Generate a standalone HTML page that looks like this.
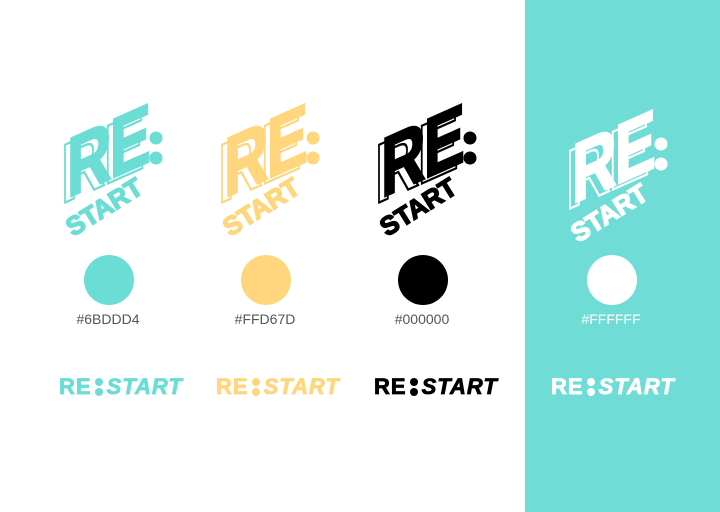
<!DOCTYPE html>
<html><head><meta charset="utf-8"><style>
body{margin:0;width:720px;height:512px;background:#fff;position:relative;overflow:hidden;font-family:"Liberation Sans",sans-serif}
.panel{position:absolute;left:525px;top:0;width:195px;height:512px;background:#6FDDD5}
.logo{position:absolute;width:120px;height:140px}
.c{position:absolute;width:50px;height:50px;border-radius:50%;top:255px}
.hex{position:absolute;top:311px;width:120px;text-align:center;font-size:14px;color:#555}
.wm{position:absolute;top:374px;font-size:22px;font-weight:bold;white-space:nowrap;letter-spacing:1px;-webkit-text-stroke:0.8px currentColor}
.wm i{font-style:italic}
.wm b{display:inline-block;width:10px;position:relative;height:20px;vertical-align:-3px;margin:0 3px 0 2px}
.wm b:before,.wm b:after{content:"";position:absolute;left:1px;width:8px;height:8px;border-radius:50%;background:currentColor}
.wm b:before{top:1px}.wm b:after{top:11px}
</style></head><body>
<div class="panel"></div>

<svg class="logo" style="left:55px;top:100px" viewBox="0 0 120 140">
<g font-family="Liberation Sans" font-weight="bold">
<g transform="translate(12,98) skewY(-24) scale(0.88,1.2)"><text x="-7" y="3" font-size="70" fill="#fff" stroke="#6BDDD4" stroke-width="2" letter-spacing="-2">RE</text><text x="0" y="0" font-size="70" fill="#6BDDD4" stroke="#6BDDD4" stroke-width="2" letter-spacing="-2">RE</text></g>
<circle cx="101" cy="38" r="6.5" fill="#6BDDD4"/><circle cx="101" cy="58" r="6.5" fill="#6BDDD4"/>
<text transform="translate(18,137) rotate(-32)" font-size="26" stroke="#6BDDD4" stroke-width="1.5" fill="#6BDDD4">START</text></g></svg>

<svg class="logo" style="left:212px;top:100px" viewBox="0 0 120 140">
<g font-family="Liberation Sans" font-weight="bold">
<g transform="translate(12,98) skewY(-24) scale(0.88,1.2)"><text x="-7" y="3" font-size="70" fill="#fff" stroke="#FFD67D" stroke-width="2" letter-spacing="-2">RE</text><text x="0" y="0" font-size="70" fill="#FFD67D" stroke="#FFD67D" stroke-width="2" letter-spacing="-2">RE</text></g>
<circle cx="101" cy="38" r="6.5" fill="#FFD67D"/><circle cx="101" cy="58" r="6.5" fill="#FFD67D"/>
<text transform="translate(18,137) rotate(-32)" font-size="26" stroke="#FFD67D" stroke-width="1.5" fill="#FFD67D">START</text></g></svg>

<svg class="logo" style="left:369px;top:100px" viewBox="0 0 120 140">
<g font-family="Liberation Sans" font-weight="bold">
<g transform="translate(12,98) skewY(-24) scale(0.88,1.2)"><text x="-7" y="3" font-size="70" fill="#fff" stroke="#000" stroke-width="2" letter-spacing="-2">RE</text><text x="0" y="0" font-size="70" fill="#000" stroke="#000" stroke-width="2" letter-spacing="-2">RE</text></g>
<circle cx="101" cy="38" r="6.5" fill="#000"/><circle cx="101" cy="58" r="6.5" fill="#000"/>
<text transform="translate(18,137) rotate(-32)" font-size="26" stroke="#000" stroke-width="1.5" fill="#000">START</text></g></svg>

<svg class="logo" style="left:560px;top:106px" viewBox="0 0 120 140">
<g font-family="Liberation Sans" font-weight="bold">
<g transform="translate(12,98) skewY(-24) scale(0.88,1.2)"><text x="-7" y="3" font-size="70" fill="#6FDDD5" stroke="#fff" stroke-width="2" letter-spacing="-2">RE</text><text x="0" y="0" font-size="70" fill="#fff" stroke="#fff" stroke-width="2" letter-spacing="-2">RE</text></g>
<circle cx="101" cy="38" r="6.5" fill="#fff"/><circle cx="101" cy="58" r="6.5" fill="#fff"/>
<text transform="translate(18,137) rotate(-32)" font-size="26" stroke="#fff" stroke-width="1.5" fill="#fff">START</text></g></svg>

<div class="c" style="left:84px;background:#6BDDD4"></div>
<div class="c" style="left:241px;background:#FFD67D"></div>
<div class="c" style="left:398px;background:#000"></div>
<div class="c" style="left:587px;background:#fff"></div>

<div class="hex" style="left:48px">#6BDDD4</div>
<div class="hex" style="left:205px">#FFD67D</div>
<div class="hex" style="left:362px">#000000</div>
<div class="hex" style="left:551px;color:#fff">#FFFFFF</div>

<div class="wm" style="left:59px;color:#6BDDD4">RE<b></b><i>START</i></div>
<div class="wm" style="left:216px;color:#FFD67D">RE<b></b><i>START</i></div>
<div class="wm" style="left:374px;color:#000">RE<b></b><i>START</i></div>
<div class="wm" style="left:551px;color:#fff">RE<b></b><i>START</i></div>
</body></html>
